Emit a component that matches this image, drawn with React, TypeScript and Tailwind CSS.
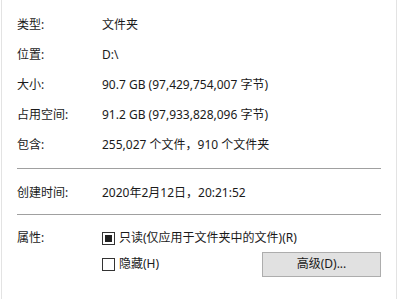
import React from "react";

const font = { fontFamily: '"Noto Sans", "Noto Sans CJK SC", sans-serif' };

function Row({ label, value }: { label: string; value: string }) {
  return (
    <div className="flex h-[30px] items-center">
      <div className="w-[85px] shrink-0">{label}</div>
      <div>{value}</div>
    </div>
  );
}

function Check({ checked, label }: { checked: boolean; label: string }) {
  return (
    <div className="flex items-center">
      <div className="flex h-[13px] w-[13px] items-center justify-center border border-[#333333] bg-white">
        {checked && <div className="h-[7px] w-[7px] bg-[#222222]" />}
      </div>
      <span className="ml-[4px]">{label}</span>
    </div>
  );
}

export default function App() {
  return (
    <div
      className="h-[299px] w-[400px] overflow-hidden bg-white text-[12px] text-[#1a1a1a]"
      style={font}
    >
      <div className="ml-[1px] mr-[3px] h-full border-x border-[#e3e3e3] pl-[15px] pr-[15px] pt-[10px]">
        <Row label="类型:" value="文件夹" />
        <Row label="位置:" value="D:\" />
        <Row label="大小:" value="90.7 GB (97,429,754,007 字节)" />
        <Row label="占用空间:" value="91.2 GB (97,933,828,096 字节)" />
        <Row label="包含:" value="255,027 个文件，910 个文件夹" />
        <div className="mt-[8px] h-px bg-[#a0a0a0]" />
        <div className="mt-[9px]">
          <Row label="创建时间:" value="2020年2月12日，20:21:52" />
        </div>
        <div className="mt-[6px] h-px bg-[#a0a0a0]" />
        <div className="mt-[10px] flex">
          <div className="w-[85px] shrink-0 pt-[4px]">属性:</div>
          <div className="flex flex-1 flex-col">
            <div className="flex h-[26px] items-center">
              <Check checked label="只读(仅应用于文件夹中的文件)(R)" />
            </div>
            <div className="flex h-[26px] items-center justify-between">
              <Check checked={false} label="隐藏(H)" />
              <button className="flex h-[25px] w-[119px] items-center justify-center border border-[#adadad] bg-[#e1e1e1]">
                高级(D)...
              </button>
            </div>
          </div>
        </div>
      </div>
    </div>
  );
}
